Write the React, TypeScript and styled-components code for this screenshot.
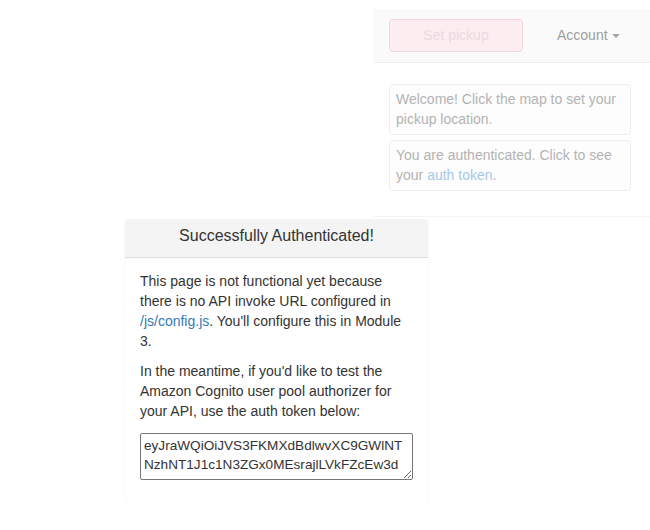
import React from "react";
import styled, { createGlobalStyle } from "styled-components";

const Global = createGlobalStyle`
  html, body { margin: 0; padding: 0; background: #ffffff; }
  body {
    font-family: "Liberation Sans", Arial, Helvetica, sans-serif;
    font-size: 14px;
    line-height: 20px;
    color: #333333;
  }
`;

const Page = styled.div`
  width: 650px;
  padding-top: 9px;
  display: flex;
  flex-direction: column;
`;

const SidePanel = styled.aside`
  align-self: flex-end;
  width: 277px;
  height: 208px;
  box-sizing: border-box;
  border-bottom: 1px solid #f5f5f5;
  display: flex;
  flex-direction: column;
`;

const NavBar = styled.nav`
  height: 54px;
  box-sizing: border-box;
  background: #fafafa;
  border-bottom: 1px solid #efefef;
  padding: 10px 0 0 16px;
  display: flex;
  align-items: flex-start;
`;

const PickupButton = styled.button`
  width: 134px;
  height: 33px;
  box-sizing: border-box;
  border: 1px solid #f3d6dd;
  border-radius: 4px;
  background: #fcedf1;
  color: #ecd9de;
  font-family: inherit;
  font-size: 14px;
  padding: 0 0 1px;
`;

const AccountMenu = styled.div`
  margin-left: 34px;
  height: 32px;
  display: flex;
  align-items: center;
  gap: 4px;
  color: #9d9d9d;
  font-size: 14px;
`;

const Caret = styled.span`
  width: 0;
  height: 0;
  border-left: 4px solid transparent;
  border-right: 4px solid transparent;
  border-top: 4px solid #a6a6a6;
  margin-top: 1px;
`;

const Messages = styled.div`
  padding: 21px 0 0 16px;
  display: flex;
  flex-direction: column;
  gap: 5px;
`;

const Message = styled.div`
  width: 242px;
  box-sizing: border-box;
  border: 1px solid #ededed;
  border-radius: 4px;
  background: #fdfdfd;
  padding: 4px 6px 5px;
  color: #b3b3b3;
  font-size: 14px;
  line-height: 20px;
`;

const FadedLink = styled.a`
  color: #a6c8e6;
  text-decoration: none;
`;

const AuthPanel = styled.section`
  margin: 2px 0 0 125px;
  width: 303px;
  border-radius: 4px;
  background: #ffffff;
  box-shadow: 0 1px 2px rgba(0, 0, 0, 0.06), 0 0 1px rgba(0, 0, 0, 0.04);
  overflow: hidden;
`;

const PanelHeading = styled.header`
  background: #f4f4f4;
  border-bottom: 1px solid #dddddd;
  padding: 8px 15px 12px;
  text-align: center;
`;

const PanelTitle = styled.h3`
  margin: 0;
  font-size: 16px;
  font-weight: normal;
  line-height: 17.6px;
  color: #333333;
`;

const PanelBody = styled.div`
  padding: 13px 15px 21px;
`;

const Paragraph = styled.p`
  margin: 0 0 10px;
`;

const Link = styled.a`
  color: #337ab7;
  text-decoration: none;
`;

const TokenBox = styled.textarea`
  display: block;
  margin-top: 12px;
  width: 273px;
  height: 47px;
  box-sizing: border-box;
  border: 1px solid #767676;
  border-radius: 2px;
  padding: 2px 3px;
  font-family: "Liberation Sans", Arial, sans-serif;
  font-size: 13.6px;
  line-height: 19px;
  color: #333333;
  overflow: hidden;
  word-break: break-all;
  background: #ffffff;
`;

const token =
  "eyJraWQiOiJVS3FKMXdBdlwvXC9GWlNTNzhNT1J1c1N3ZGx0MEsrajlLVkFZcEw3dWMnMjhvSz0iLCJhbGciOiJSUzI1NiJ9.eyJzdWIiOiI0ZTc2YzVhZi1lYzFiLTQ0YWUtYjJmNi1mZDk4NjE2YTAzZTIiLCJhdWQiOiI2cXNsM2VwZ";

export default function App() {
  return (
    <>
      <Global />
      <Page>
        <SidePanel>
          <NavBar>
            <PickupButton type="button">Set pickup</PickupButton>
            <AccountMenu>
              Account <Caret />
            </AccountMenu>
          </NavBar>
          <Messages>
            <Message>Welcome! Click the map to set your pickup location.</Message>
            <Message>
              You are authenticated. Click to see your <FadedLink href="#">auth token</FadedLink>.
            </Message>
          </Messages>
        </SidePanel>
        <AuthPanel>
          <PanelHeading>
            <PanelTitle>Successfully Authenticated!</PanelTitle>
          </PanelHeading>
          <PanelBody>
            <Paragraph>
              This page is not functional yet because there is no API invoke URL configured in{" "}
              <Link href="#">/js/config.js</Link>. You'll configure this in Module 3.
            </Paragraph>
            <Paragraph>
              In the meantime, if you'd like to test the Amazon Cognito user pool authorizer for
              your API, use the auth token below:
            </Paragraph>
            <TokenBox readOnly defaultValue={token} />
          </PanelBody>
        </AuthPanel>
      </Page>
    </>
  );
}
